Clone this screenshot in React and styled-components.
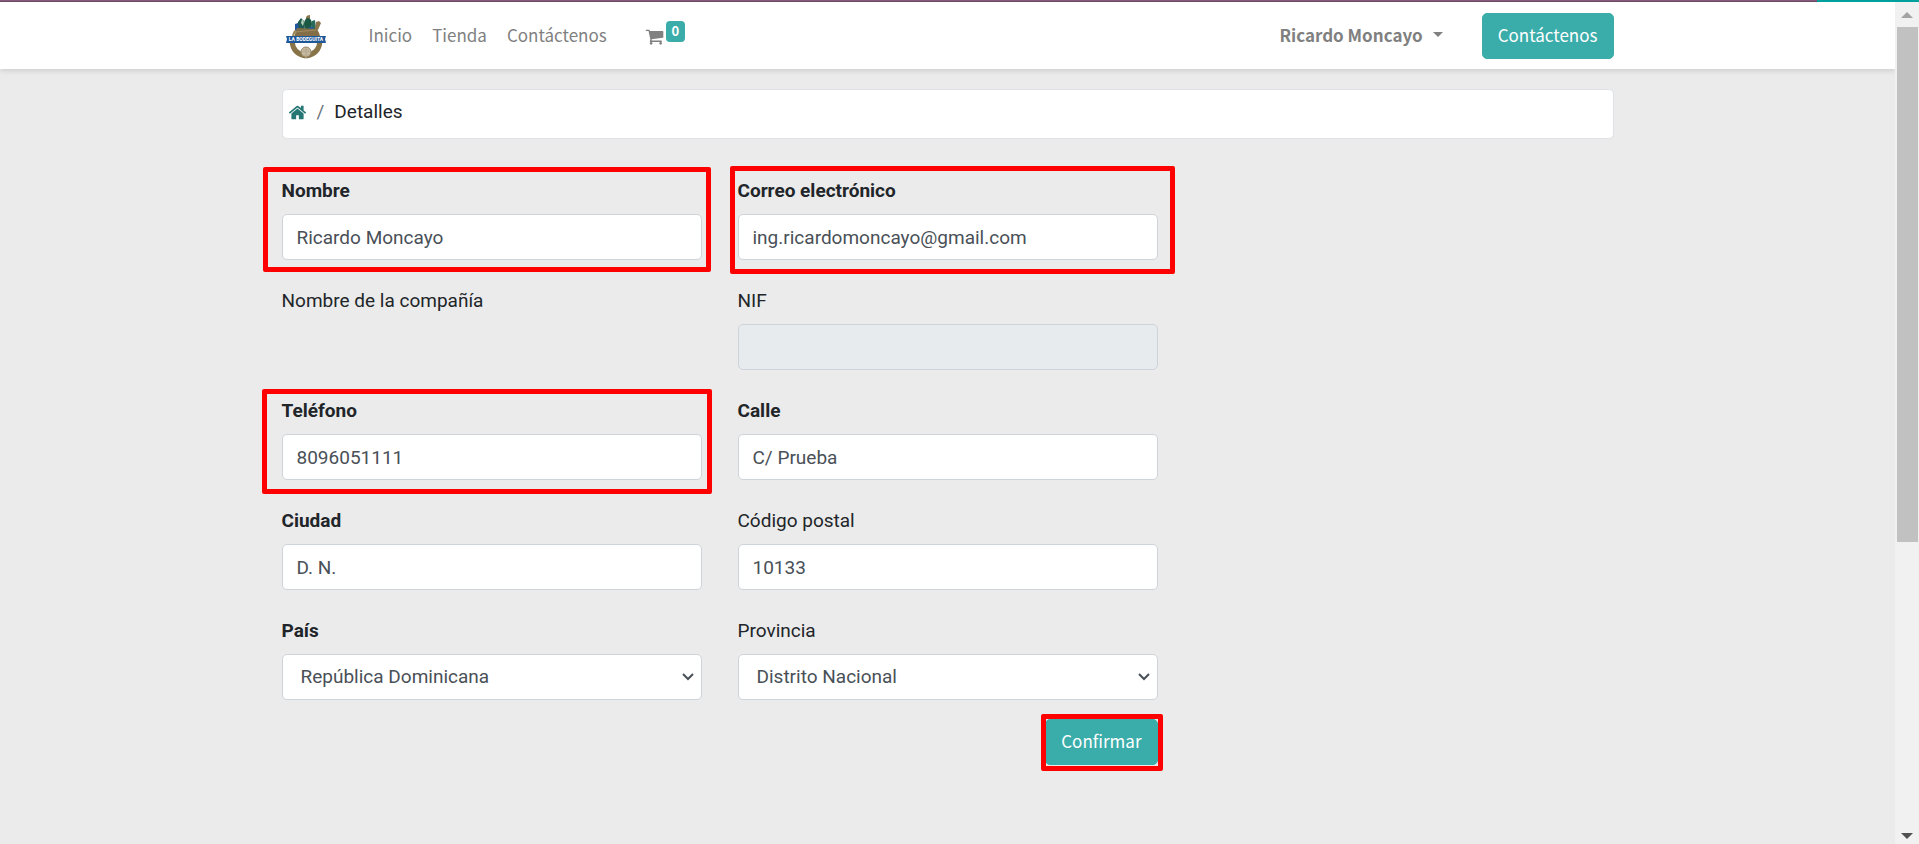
import React from "react";
import styled, { createGlobalStyle, css } from "styled-components";

const teal = "#3aadaa";
const sans = `Roboto, "Liberation Sans", sans-serif`;
const headingSans = `"Noto Sans CJK JP", "Noto Sans", sans-serif`;

const GlobalStyle = createGlobalStyle`
  *, *::before, *::after { box-sizing: border-box; }
  body {
    margin: 0;
    background: #ebebeb;
    color: #212529;
    font: 400 19px/28px ${sans};
  }
`;

const Shell = styled.div`
  display: flex;
  flex-direction: column;
  height: 100vh;
`;

const TopStrip = styled.div`
  display: flex;
  justify-content: flex-end;
  flex: none;
  height: 2px;
  background: linear-gradient(#875a7b 50%, #6c4862 50%);
`;

const StripAccent = styled.div`
  width: 102px;
  background: #00a09d;
`;

const Viewport = styled.div`
  display: flex;
  flex: 1;
  min-height: 0;
`;

const Page = styled.div`
  flex: 1;
  min-width: 0;
  overflow: hidden;
`;

const Container = styled.div`
  width: 100%;
  max-width: 1332px;
  margin: 0 auto;
`;

const Header = styled.header`
  background: #fff;
  box-shadow: 0 2px 5px rgba(0, 0, 0, 0.12);
  font-family: ${headingSans};
  font-size: 17px;
  line-height: 28px;
`;

const HeaderBar = styled(Container)`
  display: flex;
  align-items: center;
  height: 67px;
`;

const Brand = styled.a`
  display: flex;
  width: 48px;
  height: 48px;
  margin-right: 29px;
`;

const NavLink = styled.a`
  padding: 0 10px 2px;
  color: #808080;
  font-weight: 400;
  text-decoration: none;
`;

const CartLink = styled.a`
  display: flex;
  margin-left: 28px;
  padding-bottom: 4px;
  color: #808080;
  text-decoration: none;
  svg { margin-top: 6px; }
`;

const Badge = styled.span`
  margin-left: 2px;
  width: 19px;
  height: 21px;
  border-radius: 4px;
  background: ${teal};
  color: #fff;
  font-size: 13px;
  font-weight: 700;
  line-height: 20px;
  text-align: center;
`;

const UserMenu = styled.button`
  display: flex;
  align-items: center;
  gap: 10px;
  margin: 0 39px 0 auto;
  padding: 0 0 2px;
  border: 0;
  background: none;
  color: #808080;
  font: inherit;
  font-weight: 700;
  &::after {
    content: "";
    border: 5px solid transparent;
    border-top-color: currentColor;
    border-bottom: 0;
  }
`;

const Button = styled.button`
  height: 46px;
  padding: 0 15px 2px;
  border: 1px solid ${teal};
  border-radius: 5px;
  background: ${teal};
  color: #fff;
  font: 400 17px/28px ${headingSans};
`;

const Breadcrumb = styled.nav`
  display: flex;
  align-items: center;
  gap: 10px;
  margin-top: 20px;
  padding: 8px 5px 12px;
  border: 1px solid #dee2e6;
  border-radius: 5px;
  background: #fff;
  a { display: flex; color: #267674; }
`;

const Separator = styled.span`
  color: #6c757d;
`;

const Form = styled.form`
  display: grid;
  grid-template-columns: repeat(2, minmax(0, 1fr));
  column-gap: 36px;
  row-gap: 27px;
  width: calc(66.667% - 12px);
  margin-top: 38px;
`;

const Field = styled.div`
  position: relative;
  display: flex;
  flex-direction: column;
  gap: 9px;
`;

const labelText = css`
  font-weight: ${(p) => (p.$required ? 700 : 400)};
  line-height: 28px;
`;

const Label = styled.label`${labelText}`;
const LabelText = styled.span`${labelText}`;

const control = css`
  width: 100%;
  height: 46px;
  border: 1px solid #ced4da;
  border-radius: 5px;
  background: #fff;
  color: #495057;
  font: inherit;
`;

const Input = styled.input`
  ${control}
  padding: 0 14px;
  &:disabled { background: #e7ebee; }
`;

const SelectBox = styled.div`
  position: relative;
  svg {
    position: absolute;
    right: 8px;
    top: 50%;
    margin-top: -4px;
    pointer-events: none;
  }
`;

const Select = styled.select`
  ${control}
  appearance: none;
  padding: 0 18px;
`;

const Highlight = styled.span`
  position: absolute;
  inset: ${(p) => p.$inset};
  border: 5px solid #f00;
  border-radius: 2px;
  pointer-events: none;
`;

const Actions = styled.div`
  grid-column: 1 / -1;
  display: flex;
  justify-content: flex-end;
  margin-top: -8px;
`;

const Highlighted = styled.div`
  position: relative;
`;

const Scrollbar = styled.div`
  display: flex;
  flex-direction: column;
  align-items: center;
  width: 24px;
  padding: 10px 0 5px;
  background: #f1f1f1;
`;

const ScrollTrack = styled.div`
  flex: 1;
  width: 21px;
  margin: 9px 0;
`;

const ScrollThumb = styled.div`
  height: 64.6%;
  background: #c1c1c1;
`;

function Arrow({ down }) {
  return (
    <svg width="12" height="6" viewBox="0 0 12 6" aria-hidden="true">
      <path d={down ? "M0 0h12L6 6z" : "M0 6h12L6 0z"} fill={down ? "#505050" : "#a3a3a3"} />
    </svg>
  );
}

function Logo() {
  return (
    <svg width="48" height="48" viewBox="0 0 48 48" role="img" aria-label="La Bodeguita">
      <path d="M10 29q1 13 14 15M38 29q-1 13-14 15" fill="none" stroke="#887449" strokeWidth="5" />
      <path d="M11 24q1-5 4-6M37 24q-1-5-4-6" fill="none" stroke="#9a8558" strokeWidth="2" />
      <path d="M15 18l1-8 3-4 3 3 1 9z" fill="#1f5b50" />
      <path d="M13 12l3-1 1 7h-4z" fill="#2456a0" />
      <path d="M24 17V5q1-2 4-2v14z" fill="#8b754c" />
      <path d="M20 7l2 3-1 4-2-3z" fill="#b5d0bb" />
      <ellipse cx="26" cy="12" rx="4" ry="6" fill="#1b5945" />
      <path d="M29 17l1-8 3-1 1 9z" fill="#27695a" />
      <path d="M27 15h4v3h-4z" fill="#2456a0" />
      <path d="M33 17l1-7 3-1 2 2-3 7z" fill="#8b754c" />
      <path d="M15 16l20 1 3 8H12z" fill="#836e48" />
      <path d="M13 20l21-2" stroke="#a08b62" />
      <path d="M4 24h40l-1 3 1 4H4l1-4z" fill="#1f579b" />
      <text x="24" y="29" fill="#fff" textAnchor="middle" fontFamily="Roboto, sans-serif" fontWeight="700" fontSize="5">
        LA BODEGUITA
      </text>
      <circle cx="24" cy="40" r="5" fill="#c9bea5" stroke="#938363" />
      <path d="M21 38h6M20 40h8M21 43h6M24 36v9" stroke="#b3a78c" />
    </svg>
  );
}

function CartIcon() {
  return (
    <svg width="19" height="19" viewBox="0 0 1792 1792" fill="currentColor" aria-hidden="true">
      <path d="M704 1536q0 52-38 90t-90 38-90-38-38-90 38-90 90-38 90 38 38 90zm896 0q0 52-38 90t-90 38-90-38-38-90 38-90 90-38 90 38 38 90zm128-1088v512q0 24-16.5 42.5t-40.5 21.5l-1044 122q13 60 13 70 0 16-24 64h920q26 0 45 19t19 45-19 45-45 19h-1024q-26 0-45-19t-19-45q0-11 8-31.5t16-36 21.5-40 15.5-29.5l-177-823h-204q-26 0-45-19t-19-45 19-45 45-19h256q16 0 28.5 6.5t19.5 15.5 13 24.5 8 26 5.5 29.5 4.5 26h1201q26 0 45 19t19 45z" />
    </svg>
  );
}

function HomeIcon() {
  return (
    <svg width="19" height="19" viewBox="0 0 1792 1792" fill="currentColor" aria-hidden="true">
      <path d="M1472 992v480q0 26-19 45t-45 19h-384v-384h-256v384h-384q-26 0-45-19t-19-45v-480q0-1 .5-3t.5-3l575-474 575 474q1 2 1 6zm223-69l-62 74q-8 9-21 11h-3q-13 0-21-7l-692-577-692 577q-12 8-24 7-13-2-21-11l-62-74q-8-10-7-23.5t11-21.5l719-599q32-26 76-26t76 26l244 204v-195q0-14 9-23t23-9h192q14 0 23 9t9 23v408l219 182q10 8 11 21.5t-7 23.5z" />
    </svg>
  );
}

function TextField({ id, label, required, highlight, ...rest }) {
  return (
    <Field>
      <Label htmlFor={id} $required={required}>{label}</Label>
      <Input id={id} {...rest} />
      {highlight && <Highlight $inset={highlight} />}
    </Field>
  );
}

function SelectField({ id, label, required, value }) {
  return (
    <Field>
      <Label htmlFor={id} $required={required}>{label}</Label>
      <SelectBox>
        <Select id={id} defaultValue={value}>
          <option>{value}</option>
        </Select>
        <svg width="12" height="8" viewBox="0 0 12 8" aria-hidden="true">
          <path d="M1 1l5 5 5-5" fill="none" stroke="#495057" strokeWidth="2" />
        </svg>
      </SelectBox>
    </Field>
  );
}

export default function App() {
  return (
    <Shell>
      <GlobalStyle />
      <TopStrip><StripAccent /></TopStrip>
      <Viewport>
        <Page>
          <Header>
            <HeaderBar>
              <Brand href="#"><Logo /></Brand>
              <NavLink href="#">Inicio</NavLink>
              <NavLink href="#">Tienda</NavLink>
              <NavLink href="#">Contáctenos</NavLink>
              <CartLink href="#" aria-label="Carrito">
                <CartIcon />
                <Badge>0</Badge>
              </CartLink>
              <UserMenu type="button">Ricardo Moncayo</UserMenu>
              <Button type="button">Contáctenos</Button>
            </HeaderBar>
          </Header>
          <Container as="main">
            <Breadcrumb>
              <a href="#" aria-label="Inicio"><HomeIcon /></a>
              <Separator>/</Separator>
              <span>Detalles</span>
            </Breadcrumb>
            <Form onSubmit={(e) => e.preventDefault()}>
              <TextField id="name" label="Nombre" required defaultValue="Ricardo Moncayo" highlight="-10px -9px -12px -19px" />
              <TextField id="email" label="Correo electrónico" required type="email" defaultValue="ing.ricardomoncayo@gmail.com" highlight="-11px -17px -14px -8px" />
              <Field>
                <LabelText>Nombre de la compañía</LabelText>
              </Field>
              <TextField id="vat" label="NIF" disabled />
              <TextField id="phone" label="Teléfono" required type="tel" defaultValue="8096051111" highlight="-8px -10px -14px -20px" />
              <TextField id="street" label="Calle" required defaultValue="C/ Prueba" />
              <TextField id="city" label="Ciudad" required defaultValue="D. N." />
              <TextField id="zip" label="Código postal" defaultValue="10133" />
              <SelectField id="country" label="País" required value="República Dominicana" />
              <SelectField id="state" label="Provincia" value="Distrito Nacional" />
              <Actions>
                <Highlighted>
                  <Button type="submit">Confirmar</Button>
                  <Highlight $inset="-5px -5px -6px -4px" />
                </Highlighted>
              </Actions>
            </Form>
          </Container>
        </Page>
        <Scrollbar aria-hidden="true">
          <Arrow />
          <ScrollTrack><ScrollThumb /></ScrollTrack>
          <Arrow down />
        </Scrollbar>
      </Viewport>
    </Shell>
  );
}
